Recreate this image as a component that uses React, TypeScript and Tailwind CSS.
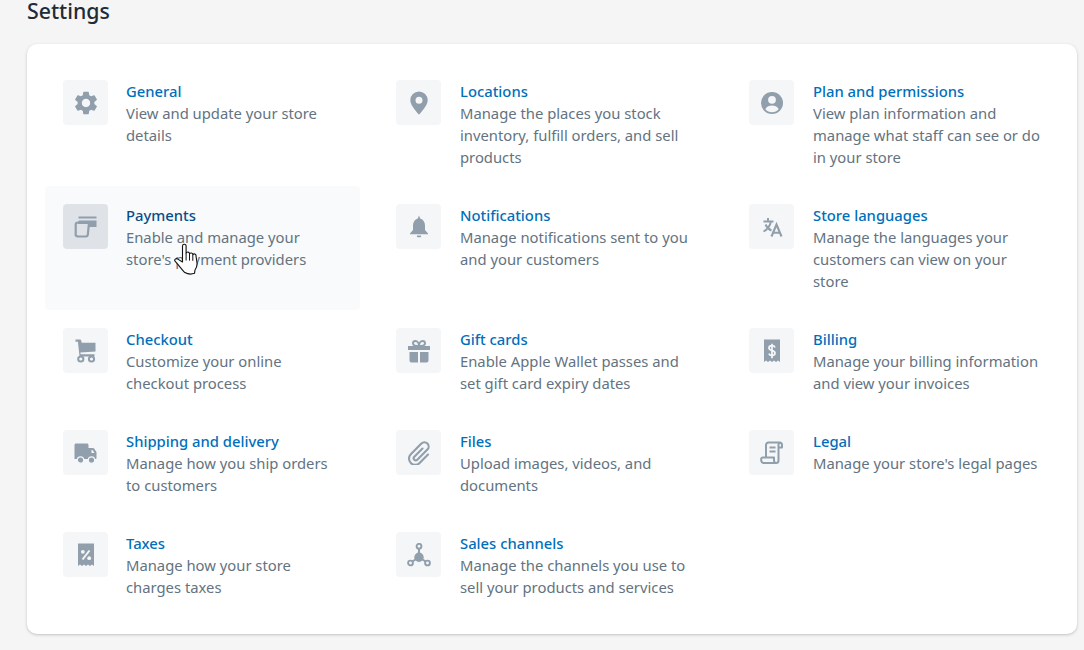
import React from "react";
import { MdSettings } from "react-icons/md";

const I = ({ children }: { children: React.ReactNode }) => (
  <svg viewBox="0 0 24 24" className="w-6 h-6 text-[#919eab]" fill="currentColor">{children}</svg>
);

const Gear = () => <MdSettings className="w-[28px] h-[28px] text-[#919eab]" />;
const Pin = () => <I><path fillRule="evenodd" d="M12 .5A8.7 8.7 0 0 0 3.300 9.200c0 5.800 8.700 14.300 8.700 14.300s8.700-8.500 8.700-14.300A8.700 8.700 0 0 0 12 .5zm0 12.200a3.500 3.500 0 1 1 0-7 3.500 3.500 0 0 1 0 7z" /></I>;
const Person = () => <I><circle cx="12" cy="12" r="11" /><circle cx="12" cy="8.800" r="3.900" fill="#f4f6f8" /><path d="M5.300 18c1.400-2.300 4-3.400 6.700-3.400s5.300 1.100 6.700 3.400c-1.600 2.100-4 3.300-6.700 3.300S6.900 20.100 5.300 18z" fill="#f4f6f8" /></I>;
const Card = () => <I><path d="M4.500 1.500h18v2h-18zM5 5.500h17.500v6.500H15l.3-3H3.500z" /><path d="M1.700 9.500a2 2 0 0 1 2-2H15l-1.200 12.300a2 2 0 0 1-2 1.700H3.700l-2-1z" fill="none" stroke="currentColor" strokeWidth="2.200" strokeLinejoin="round" /></I>;
const Bell = () => <I><path d="M12 .5l1.200 3c3.200 1 4.800 3.700 4.800 7v4.500l3 3.500v.8H3v-.8L6 15v-4.500c0-3.300 1.600-6 4.800-7z" /><rect x="9.800" y="20.400" width="4.400" height="1.800" rx=".9" /></I>;
const Translate = () => <I><path d="M3.500 6.500h10M8 3v3.500M11 6.500c-1 4.500-3.500 8-7.500 10M5.500 9.500c1.300 3 3.500 5 6 6" fill="none" stroke="currentColor" strokeWidth="1.900" /><path d="M11.500 21.500 16.500 9.500l5 12M13.300 17.800h6.400" fill="none" stroke="currentColor" strokeWidth="2.100" /></I>;
const Cart = () => <I><path fillRule="evenodd" d="M1.500.5h4.200c.8 0 1.300.5 1.500 1.200l.5 2.100h13.800v8.700l-15.200.9.400 1.800h13.800v2.300H6.800c-.7 0-1.300-.5-1.400-1.200L3.900 2.800H1.500z" /><circle cx="6.800" cy="20" r="2.600" fill="none" stroke="currentColor" strokeWidth="2" /><circle cx="17.500" cy="20" r="2.600" fill="none" stroke="currentColor" strokeWidth="2" /></I>;
const Truck = () => <I><path fillRule="evenodd" d="M2 2.500h11c.8 0 1.500.7 1.500 1.500v3h4.400c.5 0 .9.200 1.200.6l2.200 3.200c.2.300.2.500.2.800V17c0 .6-.4 1-1 1H.5V4c0-.8.700-1.500 1.500-1.500zm15.500 6.500v3h3l-2-3z" /><circle cx="6.500" cy="19" r="3.200" stroke="#f4f6f8" strokeWidth="1.200" /><circle cx="17.500" cy="19" r="3.200" stroke="#f4f6f8" strokeWidth="1.200" /></I>;
const Receipt = ({ children }: { children: React.ReactNode }) => <I><path d="M4 .5h16v22.500l-2-1.500-2 1.500-2-1.500-2 1.500-2-1.500-2 1.500-2-1.500-2 1.500z" />{children}</I>;
const Gift = () => <I><path d="M1 7h22v4H1zM2.500 13H11v10.500H4.500a2 2 0 0 1-2-2zM13 13h8.500v8.500a2 2 0 0 1-2 2H13z" /><path d="M12 7C9 7 6 6.500 6 4.400 6 2.800 7.200 2 8.400 2 10.500 2 12 4.500 12 7zm0 0c3 0 6-.5 6-2.600C18 2.800 16.800 2 15.600 2 13.500 2 12 4.500 12 7z" fill="none" stroke="currentColor" strokeWidth="2" /></I>;
const Clip = () => <I><path d="M15.500 7.500 7.300 15.700a2.100 2.100 0 0 0 3 3L20.400 8.600a4.200 4.200 0 0 0-6-6L3.800 13.200a6.200 6.200 0 0 0 8.800 8.800L21 13.500" fill="none" stroke="currentColor" strokeWidth="2.100" strokeLinecap="round" /></I>;
const Channels = () => <I><path d="M12 6v8M12 14 4 19.500M12 14l8 5.500" stroke="currentColor" strokeWidth="2" /><circle cx="12" cy="14.200" r="4.700" /><circle cx="12" cy="3.300" r="2.400" fill="#f4f6f8" stroke="currentColor" strokeWidth="1.900" /><circle cx="3.500" cy="20" r="2.400" fill="#f4f6f8" stroke="currentColor" strokeWidth="1.900" /><circle cx="20.500" cy="20" r="2.400" fill="#f4f6f8" stroke="currentColor" strokeWidth="1.900" /></I>;
const Legal = () => <I><path d="M20 1.500H8.500A2.500 2.500 0 0 0 6 4v12.500M20 1.500a2.500 2.500 0 0 1 2 2.500v2.500h-3.500V4a2.500 2.500 0 0 1 1.500-2.500zM18.500 4v15.500a2.500 2.500 0 0 1-2.500 2.500H4a2.800 2.800 0 0 1-2.800-2.800v-1.200a1.500 1.500 0 0 1 1.500-1.500h11.300v3a2.500 2.500 0 0 0 2.500 2.500" fill="none" stroke="currentColor" strokeWidth="2" strokeLinejoin="round" /><path d="M9.500 6.500h6M9.500 10.500h6" stroke="currentColor" strokeWidth="2" /></I>;

const Hand = () => (
  <svg viewBox="0 0 26 32" className="w-[26px] h-[32px]">
    <path d="M9.500 3a1.800 1.800 0 0 1 3.600 0v7.500a1.700 1.700 0 0 1 3.400.6 1.700 1.700 0 0 1 3.300.7 1.700 1.700 0 0 1 3.200 1l1 7.200c.3 3-.6 5-2 7l-.5 3.300c-3.200 1.200-6.500 1-9.700-.7-2.400-2.300-5.500-6.800-9.800-11.400-1-1.400.9-3.300 2.800-2.100L9.500 19z" fill="#fff" stroke="#111" strokeWidth="1.100" strokeLinejoin="round" />
    <path d="M13.100 10.500v7M16.500 11.100v6.500M19.800 11.800v6" fill="none" stroke="#111" strokeWidth="1" />
  </svg>
);

type Item = { t: string; d: string; i: React.ReactNode; hover?: boolean };
const Receipt1 = () => <Receipt><path d="M8.500 16.500l7-9" stroke="#f4f6f8" strokeWidth="2" /><circle cx="8.800" cy="8.800" r="1.900" fill="#f4f6f8" /><circle cx="15.200" cy="15.200" r="1.900" fill="#f4f6f8" /></Receipt>;
const Receipt2 = () => <Receipt><path d="M15 8.500c-.5-1.300-1.700-1.800-3-1.800-1.700 0-3 .9-3 2.400 0 3.300 6 1.800 6 5 0 1.500-1.300 2.400-3 2.400-1.400 0-2.600-.6-3.100-1.900M12 4.800v14.400" fill="none" stroke="#f4f6f8" strokeWidth="1.800" /></Receipt>;

const items: Item[] = [
  { t: "General", d: "View and update your store details", i: <Gear /> },
  { t: "Locations", d: "Manage the places you stock inventory, fulfill orders, and sell products", i: <Pin /> },
  { t: "Plan and permissions", d: "View plan information and manage what staff can see or do in your store", i: <Person /> },
  { t: "Payments", d: "Enable and manage your store's payment providers", i: <Card />, hover: true },
  { t: "Notifications", d: "Manage notifications sent to you and your customers", i: <Bell /> },
  { t: "Store languages", d: "Manage the languages your customers can view on your store", i: <Translate /> },
  { t: "Checkout", d: "Customize your online checkout process", i: <Cart /> },
  { t: "Gift cards", d: "Enable Apple Wallet passes and set gift card expiry dates", i: <Gift /> },
  { t: "Billing", d: "Manage your billing information and view your invoices", i: <Receipt2 /> },
  { t: "Shipping and delivery", d: "Manage how you ship orders to customers", i: <Truck /> },
  { t: "Files", d: "Upload images, videos, and documents", i: <Clip /> },
  { t: "Legal", d: "Manage your store's legal pages", i: <Legal /> },
  { t: "Taxes", d: "Manage how your store charges taxes", i: <Receipt1 /> },
  { t: "Sales channels", d: "Manage the channels you use to sell your products and services", i: <Channels /> },
];

export default function App() {
  return (
    <div className="w-[1084px] h-[650px] overflow-hidden bg-[#f5f5f5] pl-[27px] pr-[7px] font-['Noto_Sans','Open_Sans',sans-serif]">
      <h1 className="h-[44px] text-[21.3px] leading-[22px] font-medium text-[#212b36]">Settings</h1>
      <div className="bg-white rounded-[10px] h-[590px] p-[18px] shadow-[0_1px_3px_0_rgba(63,63,68,0.28)]">
        <div className="grid grid-cols-[315px_335px_328px] gap-x-[18px]">
          {items.map((it, n) => (
            <div key={it.t} className={`relative flex p-[18px] rounded ${n % 3 === 0 ? "gap-[18px]" : "gap-[19px]"} ${it.hover ? "bg-[#f9fafb]" : ""}`}>
              <div className={`w-[45px] h-[45px] shrink-0 rounded flex items-center justify-center ${it.hover ? "bg-[#dfe3e8]" : "bg-[#f4f6f8]"}`}>{it.i}</div>
              <div className="min-w-0 flex-1 text-[14.8px] leading-[22px]">
                <div className={`font-medium ${it.hover ? "text-[#084e8a]" : "text-[#006fbb]"}`}>{it.t}</div>
                <div className="text-[#637381]">{it.d}</div>
              </div>
              {it.hover && <div className="absolute left-[128px] top-[57px]"><Hand /></div>}
            </div>
          ))}
        </div>
      </div>
    </div>
  );
}
